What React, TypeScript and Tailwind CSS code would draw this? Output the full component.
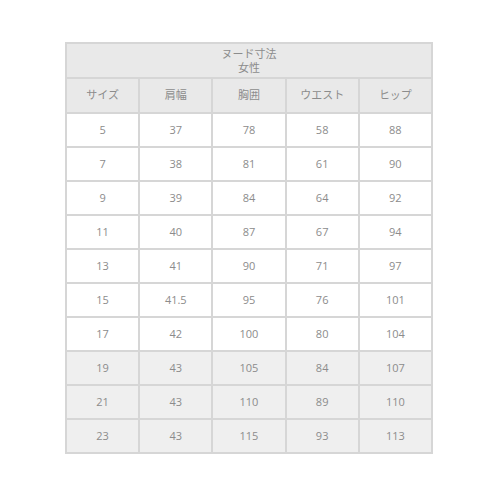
const headers = ["サイズ", "肩幅", "胸囲", "ウエスト", "ヒップ"]

const rows: { cells: string[]; shaded: boolean }[] = [
  { cells: ["5", "37", "78", "58", "88"], shaded: false },
  { cells: ["7", "38", "81", "61", "90"], shaded: false },
  { cells: ["9", "39", "84", "64", "92"], shaded: false },
  { cells: ["11", "40", "87", "67", "94"], shaded: false },
  { cells: ["13", "41", "90", "71", "97"], shaded: false },
  { cells: ["15", "41.5", "95", "76", "101"], shaded: false },
  { cells: ["17", "42", "100", "80", "104"], shaded: false },
  { cells: ["19", "43", "105", "84", "107"], shaded: true },
  { cells: ["21", "43", "110", "89", "110"], shaded: true },
  { cells: ["23", "43", "115", "93", "113"], shaded: true },
]

export default function App() {
  return (
    <div
      className="w-[500px] h-[500px] bg-white pt-[42px]"
      style={{ fontFamily: '"Open Sans", "Noto Sans CJK JP", sans-serif' }}
    >
      <table className="ml-[65px] w-[368px] border-collapse table-fixed text-[11px] text-[#8c8c8c]">
        <thead>
          <tr className="h-[35px] bg-[#e9e9e9]">
            <th
              colSpan={5}
              className="border-2 border-[#d6d6d6] font-normal leading-[14px] text-center"
            >
              ヌード寸法
              <br />
              女性
            </th>
          </tr>
          <tr className="h-[35px] bg-[#e9e9e9]">
            {headers.map((h) => (
              <th
                key={h}
                className="border-2 border-[#d6d6d6] font-normal text-center"
              >
                {h}
              </th>
            ))}
          </tr>
        </thead>
        <tbody>
          {rows.map((r) => (
            <tr
              key={r.cells[0]}
              className={r.shaded ? "h-[34px] bg-[#efefef]" : "h-[34px] bg-white"}
            >
              {r.cells.map((c, i) => (
                <td
                  key={i}
                  className="border-2 border-[#d6d6d6] text-center"
                >
                  {c}
                </td>
              ))}
            </tr>
          ))}
        </tbody>
      </table>
    </div>
  )
}
